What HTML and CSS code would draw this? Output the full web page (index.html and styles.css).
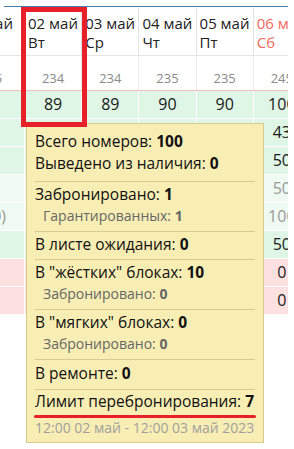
FILE: index.html
```html
<!DOCTYPE html>
<html lang="ru">
<head>
  <meta charset="UTF-8" />
  <meta name="viewport" content="width=device-width, initial-scale=1" />
  <title>Шахматка номеров</title>
  <link rel="stylesheet" href="styles.css">
</head>
<body>
  <div class="board">
    <div class="topline"></div>

    <div class="row head">
      <div class="cell">01 май<br>Пн</div>
      <div class="cell">02 май<br>Вт</div>
      <div class="cell">03 май<br>Ср</div>
      <div class="cell">04 май<br>Чт</div>
      <div class="cell">05 май<br>Пт</div>
      <div class="cell weekend">06 май<br>Сб</div>
    </div>

    <div class="row cap">
      <div class="cell">235</div>
      <div class="cell">234</div>
      <div class="cell">234</div>
      <div class="cell">235</div>
      <div class="cell">235</div>
      <div class="cell">245</div>
    </div>

    <div class="row free">
      <div class="cell">88</div>
      <div class="cell">89</div>
      <div class="cell">89</div>
      <div class="cell">90</div>
      <div class="cell">90</div>
      <div class="cell">100</div>
    </div>
    <div class="row free">
      <div class="cell">41</div>
      <div class="cell">42</div>
      <div class="cell">42</div>
      <div class="cell">43</div>
      <div class="cell">43</div>
      <div class="cell">43</div>
    </div>
    <div class="row free">
      <div class="cell">50</div>
      <div class="cell">50</div>
      <div class="cell">50</div>
      <div class="cell">50</div>
      <div class="cell">50</div>
      <div class="cell">50</div>
    </div>
    <div class="row soft">
      <div class="cell">50</div>
      <div class="cell">50</div>
      <div class="cell">50</div>
      <div class="cell">50</div>
      <div class="cell">50</div>
      <div class="cell">50</div>
    </div>
    <div class="row soft">
      <div class="cell tail">(0)</div>
      <div class="cell">100</div>
      <div class="cell">100</div>
      <div class="cell">100</div>
      <div class="cell">100</div>
      <div class="cell">100</div>
    </div>
    <div class="row free">
      <div class="cell">50</div>
      <div class="cell">50</div>
      <div class="cell">50</div>
      <div class="cell">50</div>
      <div class="cell">50</div>
      <div class="cell">50</div>
    </div>
    <div class="row busy">
      <div class="cell">0</div>
      <div class="cell">0</div>
      <div class="cell">0</div>
      <div class="cell">0</div>
      <div class="cell">0</div>
      <div class="cell">0</div>
    </div>
    <div class="row busy">
      <div class="cell">0</div>
      <div class="cell">0</div>
      <div class="cell">0</div>
      <div class="cell">0</div>
      <div class="cell">0</div>
      <div class="cell">0</div>
    </div>

    <!-- всплывающая подсказка по дню -->
    <div class="tip">
      <div class="sec first">
        <div class="line">Всего номеров: <b>100</b></div>
        <div class="line">Выведено из наличия: <b>0</b></div>
      </div>
      <div class="sec">
        <div class="line">Забронировано: <b>1</b></div>
        <div class="line sub">Гарантированных: <b>1</b></div>
      </div>
      <div class="sec">
        <div class="line">В листе ожидания: <b>0</b></div>
      </div>
      <div class="sec">
        <div class="line">В "жёстких" блоках: <b>10</b></div>
        <div class="line sub">Забронировано: <b>0</b></div>
      </div>
      <div class="sec">
        <div class="line">В "мягких" блоках: <b>0</b></div>
        <div class="line sub">Забронировано: <b>0</b></div>
      </div>
      <div class="sec repair">
        <div class="line">В ремонте: <b>0</b></div>
      </div>
      <div class="sec last">
        <div class="line">Лимит перебронирования: <b>7</b></div>
        <div class="underline"></div>
        <div class="period">12:00 02 май - 12:00 03 май 2023</div>
      </div>
    </div>

    <div class="marker"></div>
  </div>
</body>
</html>
```

FILE: styles.css
```css
body {
  margin: 0;
  background: #fff;
  font-family: "Open Sans", "Noto Sans", sans-serif;
  color: #1a1a1a;
}
.board {
  position: relative;
  width: 288px;
  height: 449px;
  overflow: hidden;
}
.topline {
  height: 1px;
  margin: 6px 0 0 4px;
  background: #4a7db0;
}
.row {
  display: grid;
  grid-template-columns: 64px repeat(5, 56.2px);
  column-gap: 1px;
  margin-left: -40px;
  width: 350px;
}
.cell {
  text-align: center;
  white-space: nowrap;
  overflow: hidden;
  box-sizing: border-box;
}
/* шапка с датами */
.head {
  margin-top: 1px;
  background: #e4e4e4;
  border-bottom: 1px solid #e4e4e4;
}
.head .cell {
  background: #fff;
  text-align: left;
  padding: 6px 0 2px 3px;
  height: 47px;
  font-size: 15px;
  line-height: 19px;
  color: #222;
}
.head .weekend {
  color: #f2685a;
}
.cap {
  background: #ececec;
  border-bottom: 1px solid #f4bcbc;
}
.cap .cell {
  background: #fff;
  height: 34px;
  display: flex;
  align-items: flex-end;
  justify-content: center;
  font-size: 13px;
  line-height: 18px;
  color: #8a8a8a;
  padding-bottom: 3px;
}
.cap .cell:first-child {
  padding-right: 2px;
}
.free, .soft, .busy {
  border-bottom: 1px solid #fff;
}
.free .cell, .soft .cell, .busy .cell {
  height: 27px;
  line-height: 27px;
  font-size: 16px;
}
.free .cell:first-child,
.soft .cell:first-child,
.busy .cell:first-child {
  padding-right: 12px;
}
.free .cell { background: #dff5e6; }
.soft .cell { background: #eefaf2; color: #999; }
.busy .cell { background: #fde0e0; }
.soft .cell.tail {
  text-align: right;
  padding-right: 18px;
}
/* подсказка */
.tip {
  position: absolute;
  left: 26px;
  top: 123px;
  width: 238px;
  box-sizing: border-box;
  padding: 0 8px;
  background: #f8eeb4;
  border: 1px solid #d8cb8f;
  z-index: 2;
}
.sec {
  padding: 1px 0 4px;
  border-top: 1px solid #d6c995;
}
.sec.first {
  border-top: none;
  padding: 6px 0 7px;
}
.sec.repair {
  padding: 2px 0 5px;
}
.sec.last {
  padding: 0 0 4px;
}
.line {
  font-size: 15.5px;
  line-height: 22px;
  color: #111;
  white-space: nowrap;
}
.line b {
  font-weight: 700;
}
.line.sub {
  font-size: 14px;
  padding-left: 8px;
  color: #666;
}
.underline {
  height: 3px;
  margin: 3px -1px 0 -1px;
  border-radius: 2px;
  background: #e8202a;
}
.period {
  font-size: 14px;
  line-height: 20px;
  color: #a0a0a0;
  white-space: nowrap;
}
/* выделение дня */
.marker {
  position: absolute;
  left: 21px;
  top: 7px;
  width: 66px;
  height: 120px;
  box-sizing: border-box;
  border: 5px solid #e8202a;
  z-index: 3;
}
```
